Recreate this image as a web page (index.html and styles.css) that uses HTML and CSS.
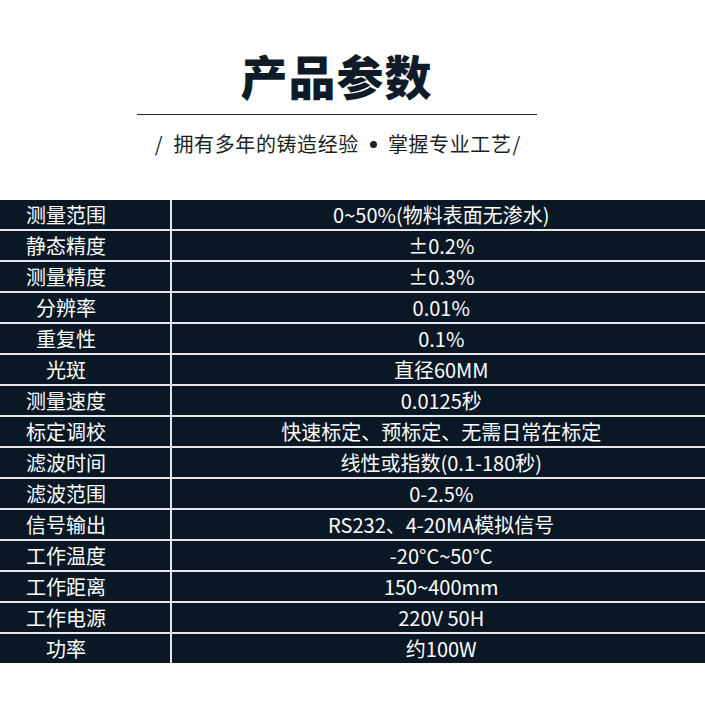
FILE: index.html
```html
<!DOCTYPE html>
<html lang="zh-CN">
<head>
<meta charset="utf-8">
<title>产品参数</title>
<link rel="stylesheet" href="styles.css">
</head>
<body>
<header class="intro">
  <h1 class="title">产品参数</h1>
  <div class="rule"></div>
  <p class="tagline"><span class="slash">/</span><span>拥有多年的铸造经验</span><span class="dot"></span><span>掌握专业工艺</span><span class="slash end">/</span></p>
</header>
<section class="specs">
  <div class="k">测量范围</div><div class="v">0~50%(物料表面无渗水)</div>
  <div class="k">静态精度</div><div class="v">±0.2%</div>
  <div class="k">测量精度</div><div class="v">±0.3%</div>
  <div class="k">分辨率</div><div class="v">0.01%</div>
  <div class="k">重复性</div><div class="v">0.1%</div>
  <div class="k">光斑</div><div class="v">直径60MM</div>
  <div class="k">测量速度</div><div class="v">0.0125秒</div>
  <div class="k">标定调校</div><div class="v">快速标定、预标定、无需日常在标定</div>
  <div class="k">滤波时间</div><div class="v">线性或指数(0.1-180秒)</div>
  <div class="k">滤波范围</div><div class="v">0-2.5%</div>
  <div class="k">信号输出</div><div class="v">RS232、4-20MA模拟信号</div>
  <div class="k">工作温度</div><div class="v">-20°C~50°C</div>
  <div class="k">工作距离</div><div class="v">150~400mm</div>
  <div class="k">工作电源</div><div class="v">220V 50H</div>
  <div class="k">功率</div><div class="v">约100W</div>
</section>
</body>
</html>
```
FILE: styles.css
```css
html, body {
  margin: 0;
  padding: 0;
  background: #ffffff;
}
body {
  font-family: "Noto Sans CJK SC", "Noto Sans", sans-serif;
}
.intro {
  padding: 51px 32px 0 0;
  text-align: center;
  color: #0f1c28;
}
.title {
  margin: 0;
  font-size: 47px;
  line-height: 47px;
  font-weight: 900;
  letter-spacing: 1px;
}
.rule {
  width: 400px;
  height: 1px;
  background: #1c2631;
  margin: 16px auto 0;
}
.tagline {
  margin: 19px 0 0;
  font-size: 20px;
  line-height: 20px;
  color: #1b1f24;
  letter-spacing: 0.6px;
  display: flex;
  justify-content: center;
  align-items: center;
  padding-left: 2px;
}
.slash {
  margin-right: 11px;
  letter-spacing: 0;
}
.slash.end {
  margin: 0 0 0 1px;
}
.dot {
  display: inline-block;
  width: 7px;
  height: 7px;
  border-radius: 50%;
  background: #1b1f24;
  margin: 0 11px 0 11px;
}
.specs {
  margin-top: 46px;
  display: grid;
  grid-template-columns: 170px 1fr;
  grid-auto-rows: 29px;
  gap: 2px 1.5px;
  background: #e4e6e8;
}
.k, .v {
  background: #0a1826;
  color: #ffffff;
  font-size: 20px;
  line-height: 29px;
  text-align: center;
  white-space: nowrap;
}
.k {
  padding-right: 38px;
}
.v {
  padding-left: 6px;
}
```
